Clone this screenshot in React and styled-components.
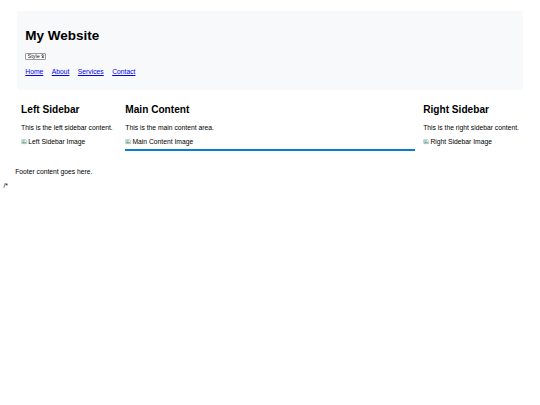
import React, { useState } from 'react';
import styled, { createGlobalStyle } from 'styled-components';

// the reference is a 1280px wide page shown at 540px wide,
// so every size is written at page scale and multiplied down
const SCALE = 0.421875;
const u = n => `${+(n * SCALE).toFixed(3)}px`;

const GlobalStyle = createGlobalStyle`
  body {
    margin: ${u(8)};
    font-family: "Liberation Sans", Arial, sans-serif;
    font-size: ${u(16)};
    line-height: ${u(18.4)};
    color: #000;
    background: #fff;
  }
`;

const Container = styled.div`
  max-width: ${u(1200)};
  margin: 0 auto;
  padding: ${u(17.3)} 0 ${u(24.2)};
`;

const Header = styled.header`
  background-color: #f8f9fa;
  padding: ${u(20)};
`;

const SiteTitle = styled.h1`
  font-size: ${u(32)};
  line-height: ${u(36.8)};
  font-weight: bold;
  margin: ${u(21.44)} 0;
`;

const SelectWrap = styled.div`
  position: relative;
  width: ${u(50)};
  margin-top: ${u(12.4)};
`;

const StyleSelect = styled.select`
  display: block;
  appearance: none;
  width: 100%;
  height: ${u(17)};
  margin: 0;
  padding: 0 0 0 ${u(3)};
  font-family: "Liberation Sans", Arial, sans-serif;
  font-size: ${u(13)};
  line-height: 1;
  color: #111;
  background: #fff;
  border: 1px solid #9a9a9a;
  border-radius: 1px;
`;

const Chevron = styled.svg`
  position: absolute;
  right: ${u(4)};
  top: 50%;
  transform: translateY(-50%);
  pointer-events: none;
`;

const NavList = styled.ul`
  display: flex;
  gap: ${u(20)};
  list-style: none;
  margin: ${u(20.4)} 0 ${u(12.3)};
  padding: 0;
`;

const NavLink = styled.a`
  color: #0000ee;
  text-decoration: underline;
`;

const Columns = styled.div`
  display: flex;
  gap: ${u(10)};
`;

const Sidebar = styled.aside`
  flex: none;
  padding: ${u(10)};
`;

const Main = styled.main`
  flex: 1;
  margin-left: ${u(10)};
  padding: ${u(10)} ${u(10)} ${u(4)} 0;
  border-bottom: 2px solid #0a7ccc;
`;

const SectionTitle = styled.h2`
  font-size: ${u(24)};
  line-height: ${u(27.6)};
  font-weight: bold;
  margin: ${u(23)} 0 ${u(19.92)};
`;

const Text = styled.p`
  margin: ${u(16)} 0;
`;

const FooterText = styled.p`
  margin: ${u(16)} 0 ${u(14.5)};
`;

const BrokenImage = styled.span`
  display: inline-flex;
  align-items: flex-start;
  gap: ${u(1)};
`;

const BrokenIcon = styled.svg`
  flex: none;
  width: ${u(16)};
  height: ${u(16)};
  margin-top: ${u(1)};
`;

const Footer = styled.footer`
  padding: 0 ${u(28)};
`;

function ImageAlt({ alt }) {
  return (
    <BrokenImage role="img" aria-label={alt}>
      <BrokenIcon viewBox="0 0 16 16">
        <path d="M1.5 1.5h9l3 3v6.5l-2.5-1.5-2.5 2-2.5-2-2.5 2-2-1.5z" fill="#f1f5fb" stroke="#8c8c8c" />
        <path d="M2.5 10.5l3-4 2.5 2.5 2-1.5 2.5 2.5" fill="#5fb55f" stroke="#3d9a3d" />
        <rect x="3" y="3" width="6" height="3" fill="#7fb2ea" />
      </BrokenIcon>
      {alt}
    </BrokenImage>
  );
}

export default function App() {
  const [style, setStyle] = useState('style1');

  return (
    <>
      <GlobalStyle />
      <Container>
        <Header>
          <SiteTitle>My Website</SiteTitle>
          <SelectWrap>
            <StyleSelect value={style} onChange={e => setStyle(e.target.value)}>
              <option value="style1">Style 1</option>
              <option value="style2">Style 2</option>
            </StyleSelect>
            <Chevron width="3.5" height="2.5" viewBox="0 0 8 5">
              <path d="M1 1l3 3 3-3" fill="none" stroke="#222" strokeWidth="1.8" />
            </Chevron>
          </SelectWrap>
          <NavList>
            <li><NavLink href="#">Home</NavLink></li>
            <li><NavLink href="#">About</NavLink></li>
            <li><NavLink href="#">Services</NavLink></li>
            <li><NavLink href="#">Contact</NavLink></li>
          </NavList>
        </Header>

        <Columns>
          <Sidebar>
            <SectionTitle>Left Sidebar</SectionTitle>
            <Text>This is the left sidebar content.</Text>
            <ImageAlt alt="Left Sidebar Image" />
          </Sidebar>
          <Main>
            <SectionTitle>Main Content</SectionTitle>
            <Text>This is the main content area.</Text>
            <ImageAlt alt="Main Content Image" />
          </Main>
          <Sidebar>
            <SectionTitle>Right Sidebar</SectionTitle>
            <Text>This is the right sidebar content.</Text>
            <ImageAlt alt="Right Sidebar Image" />
          </Sidebar>
        </Columns>
      </Container>
      <Footer>
        <FooterText>Footer content goes here.</FooterText>
      </Footer>
      /*
    </>
  );
}
